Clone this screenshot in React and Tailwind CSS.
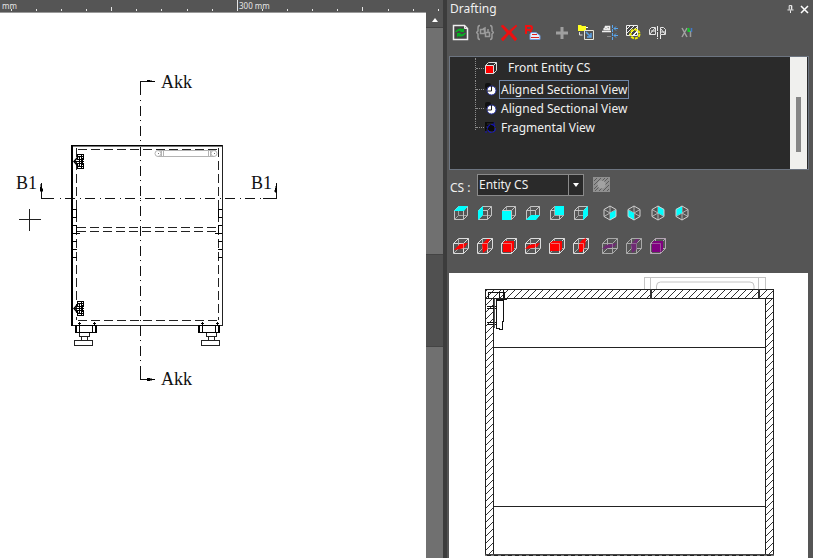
import React, { useState } from 'react';

const minorTicks = [11, 36, 61, 86, 136, 161, 187, 212, 262, 287, 312, 337, 388, 413, 438];

const Ruler = () => (
  <div className="h-3 shrink-0 overflow-hidden bg-[#555555]">
    <svg width="1200" height="12" shapeRendering="crispEdges" fill="#e6e6e6">
      {minorTicks.map((x) => (
        <rect key={x} x={x} y="9" width="1" height="2" />
      ))}
      <rect x="111" y="7" width="1" height="4" />
      <rect x="362" y="7" width="1" height="4" />
      <rect x="237" y="0" width="1" height="11" />
      <text x="2" y="9" className="font-['Noto_Sans',sans-serif] text-[8px]">mm</text>
      <text x="239" y="9" className="font-['Noto_Sans',sans-serif] text-[8px]">300 mm</text>
    </svg>
  </div>
);

const Hinge = ({ y }) => (
  <g transform={`translate(74 ${y})`} stroke="#000" fill="none">
    <path d="M3.5 .5h6v5h-6zM3.5 9.5h6v5h-6zM4 2.5h5M4 12.5h5M7.5 1v13" />
    <path d="M1 7.5h9M5.5 3v9M8.5 4v7M4 5.5h6M4 9.5h6" />
    <path d="M4 3L0 7.500 4 12" shapeRendering="auto" strokeWidth="1.500" />
    <path d="M2.500 6.500h1M2.500 8.500h1" stroke="#fff" />
  </g>
);

const Foot = ({ x, base }) => (
  <g fill="none" stroke="#000">
    <path d={`M${x}.5 325.5h21v7h-21zM${x + 1}.5 325v8M${x + 20}.5 325v8M${x + 4}.5 325v7M${x + 17}.5 325v7`} />
    <path d={`M${x} 332.5h22`} />
    <path d={`M${x + 3} 323.5h3M${x + 18} 323.5h3M${x + 4}.5 322v3M${x + 19}.5 322v3`} />
    <path d={`M${base + 5}.5 333v3h10v-3M${base + 7}.5 336v4M${base + 13}.5 336v4M${base}.5 340.5h18v5h-18z`} stroke="#222" />
  </g>
);

const holes = [209, 217, 225, 233, 241, 249, 257];

const CabinetDrawing = () => (
  <svg width="426" height="545" viewBox="0 13 426 545" shapeRendering="crispEdges">
    {/* section lines */}
    <g fill="none" stroke="#111">
      <path d="M155 81.5H140.5V95" />
      <path d="M140.5 100V367" strokeDasharray="1 5 10 4" />
      <path d="M140.5 367V379.5H155" />
      <path d="M41.5 183V198.5H54" />
      <path d="M60 198.5H263" strokeDasharray="1 4 10 5" />
      <path d="M263 198.5H276.5V183" />
    </g>
    <path d="M147 80l8 1.5-8 .5zM147 378l8 1.5-8 1.5zM41 184l2 7h-3zM276.5 184v8h-2z" fill="#000" stroke="#000" strokeWidth=".5" />
    <path d="M19 219.5h22M29.5 209v22" stroke="#222" />

    {/* body */}
    <path d="M71 145.5H223" stroke="#000" />
    <path d="M71 146.5H223" stroke="#777" />
    <path d="M72 145V326" stroke="#000" strokeWidth="2" />
    <path d="M222.5 145V325.5H73" stroke="#222" fill="none" />
    <g stroke="#222" strokeDasharray="9 4" fill="none">
      <path d="M78 149.5H218M76.5 148V320M218.5 148V320M78 320.5H218" />
      <path d="M77 227.5H218M77 231.5H218" />
    </g>
    <path d="M76.5 209v8M76.5 225v8M218.5 209v8M218.5 225v8" stroke="#000" />
    {holes.map((y) => (
      <path key={y} d={`M73 ${y}.5h4M218 ${y}.5h4`} stroke="#000" />
    ))}
    <path d="M77 233.5h3M215 233.5h3" stroke="#000" />

    {/* handle */}
    <g fill="none" stroke="#b4b4b4">
      <path d="M158 150.5H216M158 156.5H214M161.5 150v6M163.5 150v6M208.5 150v6M210.5 150v6" />
      <circle cx="158" cy="153.500" r="3" shapeRendering="auto" />
      <circle cx="214" cy="153.500" r="3" shapeRendering="auto" />
      <path d="M158 153.500h1M214 153.500h1" stroke="#777" />
    </g>

    <Hinge y={154} />
    <Hinge y={301} />
    <Foot x={75} base={74} />
    <Foot x={198} base={201} />

    <g className="font-['Liberation_Serif',serif] text-[18px]" fill="#111">
      <text x="161" y="88">Akk</text>
      <text x="161" y="385">Akk</text>
      <text x="16" y="189">B1</text>
      <text x="251" y="189">B1</text>
    </g>
  </svg>
);

const SectionDrawing = () => (
  <svg width="359" height="285" viewBox="449 273 359 285" shapeRendering="crispEdges">
    <defs>
      <pattern id="hatch" width="7" height="7" patternUnits="userSpaceOnUse">
        <path d="M-1 1L1 -1M0 7L7 0M6 8L8 6" stroke="#333" shapeRendering="auto" />
      </pattern>
    </defs>
    <g fill="none" stroke="#c4c4c4">
      <path d="M644.500 289V277.500H765.500V289M650.500 277V289M758.500 277V289" />
      <path d="M656.500 289V286q0-4 4-4H750q4 0 4 4V289" shapeRendering="auto" />
    </g>
    <g fill="url(#hatch)" stroke="#222">
      <rect x="485.500" y="298.500" width="8" height="256" />
      <rect x="765.500" y="298.500" width="8" height="256" />
      <rect x="485.500" y="289.500" width="288" height="9" />
    </g>
    <path d="M650.500 289v10M759 289v10" stroke="#333" strokeWidth="2" />
    <path d="M494 347.500H765M494 506.500H765" stroke="#222" />
    <path d="M485 555H774" stroke="#777" strokeWidth="2" />
    <path d="M485 554.500H774" stroke="#444" />
    <path d="M487 555.500H774" stroke="#222" strokeDasharray="4 3" />
    {/* hinge */}
    <g fill="none" stroke="#111">
      <path d="M488.500 298V292.500H504.500V298M499.500 292v6M503.500 290v8" />
      <path d="M496 299.500h11M487 306.500h10M487 308.500h10M487 322.500h10M487 324.500h10" />
      <path d="M496.500 300V328l3 1h3V322l1-1V300z" fill="#fff" />
      <path d="M494.500 299V328" stroke="#555" />
    </g>
  </svg>
);

const boxFaces = {
  top: '0,5 5,0 14,0 10,5',
  left: '0,5 5,0 5,9 0,14',
  front: '0,5 9,5 9,14 0,14',
  bottom: '0,14 5,9 14,9 10,14',
  back: '5,0 14,0 14,9 5,9',
  right: '9,5 14,0 14,9 9,14',
};

const BoxIcon = ({ face }) => (
  <svg width="16" height="16" viewBox="-1 -1 16 16">
    <path d="M4.500 .5v9h9M4.500 9.500L.5 13.500" stroke="#a5a5a5" fill="none" />
    <path d="M.5 4.500h9v9h-9zM.5 4.500l4-4h9l-4 4M13.500 .5v9l-4 4" stroke="#c4c4c4" fill="none" />
    <polygon points={boxFaces[face]} fill="#00ffff" />
  </svg>
);

const hexFaces = {
  frontRight: '7,7 13,4 13,11 7,14',
  frontLeft: '1,4 7,7 7,14 1,11',
  backRight: '7,0 13,3 13,10 7,7',
  backLeft: '1,3 7,0 7,7 1,10',
};

const HexIcon = ({ face }) => (
  <svg width="16" height="16" viewBox="-1 -1 16 16">
    <path d="M1 3.500L7 7l6-3.500M7 7v7M7 0v7M1 10.500L7 7l6 3.500" stroke="#b4b4b4" fill="none" />
    <polygon points={hexFaces[face]} fill="#00ffff" />
    <path d="M7 0l6 3.500v7L7 14l-6-3.500v-7z" stroke="#d0d0d0" fill="none" />
  </svg>
);

const cutFaces = {
  horizontal: '2,13 6,9 8,7 16,6 12,11 8,12',
  vertical: '6,7 11,2 14,2 12,6 12,12 7,16',
  front: '3,6 5,4 14,4 14,12 12,15 3,15',
  flat: '1,12 5,8 16,6 13,10 8,11',
  rear: '2,6 5,4 14,4 14,12 12,14 2,14',
  side: '7,7 10,3 14,1 13,10 10,15 7,15',
};

const CutIcon = ({ face, color = '#ff0000', edge = '#dcdcdc' }) => (
  <svg width="18" height="18" viewBox="0 0 18 18">
    <path d="M1.500 6.500h10v10h-10zM1.500 6.500l5-5h10l-5 5M16.500 1.500v10l-5 5" stroke={edge} fill="none" />
    <path d="M6.500 1.500v10h10M6.500 11.500l-5 5" stroke="#b0b0b0" fill="none" />
    <polygon points={cutFaces[face]} fill={color} />
    <path d="M3 6.500h8.500v8" stroke={edge} strokeOpacity=".5" fill="none" />
  </svg>
);

const toolIcons = {
  Refresh: (
    <>
      <path d="M1.500 1.500h11l3 3v11h-14z" stroke="#eee" strokeWidth="1.500" fill="#444" />
      <path d="M12.500 1.500v3h3" stroke="#eee" fill="none" />
      <path d="M3 8q3-5 8-3l1-1v4H8l1-1Q6 6 5 8zM14 9q-3 5-8 3l-1 2V9h4l-1 1q3 1 4-1z" fill="#08b022" />
    </>
  ),
  Group: (
    <g stroke="#9b9b9b" fill="none">
      <path d="M4 1.500Q2 1.500 2 4v3L.5 8.500 2 10v3q0 2.500 2 2.500M14 1.500q2 0 2 2.500v3l1.500 1.500L16 10v3q0 2.500-2 2.500" strokeWidth="1.500" />
      <path d="M4.500 5.500h4v4h-4zM9.500 8.500h4v4h-4zM7 5l2-1v4M12 8V5" strokeWidth="1.500" />
    </g>
  ),
  Delete: (
    <path d="M1 2l2-1 6 6 7-6 1 1-6 6 6 7-2 2-6-7-6 7-2-2 6-6z" fill="#f00f0f" stroke="#f00f0f" strokeWidth=".5" />
  ),
  Rename: (
    <>
      <path d="M2 10V2h4q2 0 2 2t-2 2H2m4 0l2 4" stroke="#f01010" strokeWidth="2" fill="none" />
      <path d="M7 8.500h5l4 3v4H6v-5z" fill="#e8eefc" stroke="#6f9de0" />
      <path d="M8 10.500h5M7 13.500h8" stroke="#d22" />
    </>
  ),
  Add: <path d="M9 3v12M3 9h12" stroke="#9f9f9f" strokeWidth="3" />,
  'Insert view': (
    <>
      <path d="M1 1h3l1 1h4v5H1z" fill="#ffff20" />
      <path d="M9 3.500h2" stroke="#fff" />
      <path d="M2.500 8v3h3" stroke="#ddd" fill="none" />
      <path d="M7.500 6.500h9v9h-9z" stroke="#e6e6d8" fill="#555" />
      <path d="M9 8l5 5m0-4v4h-4" stroke="#5aa2e8" fill="none" strokeWidth="1.500" />
    </>
  ),
  Align: (
    <>
      <path d="M1 7.500h9M2.500 5.500h6v-3h-3l-3 3M4 2l4 4M7 5h2" stroke="#eee" strokeWidth="1.500" fill="none" />
      <path d="M11.500 1v16" stroke="#58a6ee" strokeDasharray="3 1" />
      <path d="M17 4.500h-4l2-2m-2 2l2 2M17 11.500h-4l2-2m-2 2l2 2" stroke="#58a6ee" fill="none" />
      <path d="M6 12.500h4" stroke="#888" />
    </>
  ),
  Fragment: (
    <>
      <path d="M1.500 1.500h11v10h-11z" fill="#444" stroke="#eee" />
      <path d="M1 6l5-5M1 10l9-9M3 12l9-9M7 12l5-5" stroke="#eee" />
      <circle cx="10" cy="10" r="4.500" fill="none" stroke="#f2f200" strokeWidth="2" strokeDasharray="3 1" />
      <path d="M8 12l4-4" stroke="#fff" />
    </>
  ),
  Mirror: (
    <>
      <path d="M8.500 2v13" stroke="#eee" strokeDasharray="5 1" />
      <path d="M.5 5.500l2-2h4v7h-6zM11.500 3.500h3l2 2v5h-5zM1 10l5-6M2 7h4M12 5l4 5M12 8h4" stroke="#e4e4e4" fill="none" />
      <path d="M11.500 11v4" stroke="#eee" />
    </>
  ),
  Coordinates: (
    <>
      <path d="M4 4l5 9M9 4l-5 9" stroke="#a2a2a2" strokeWidth="1.500" />
      <path d="M10.500 4v3h2" stroke="#14c828" strokeWidth="2" fill="none" />
      <path d="M12.500 7v6" stroke="#9a9a9a" strokeWidth="1.500" />
      <path d="M13.500 4v4" stroke="#3f78c8" strokeWidth="1.500" />
    </>
  ),
};

const ToolButton = ({ label, children }) => (
  <button type="button" aria-label={label} className="flex h-6 w-6 items-center justify-center hover:bg-[#6a6a6a]">
    {children}
  </button>
);

const Tool = ({ name }) => (
  <ToolButton label={name}>
    <svg width="18" height="18" viewBox="0 0 18 18">{toolIcons[name]}</svg>
  </ToolButton>
);

const SectionGlyph = () => (
  <svg width="14" height="14" viewBox="0 0 14 14">
    <rect x="1" y="0" width="6" height="6" rx="2" fill="#111" />
    <circle cx="7.500" cy="7.500" r="4.500" fill="#fff" stroke="#2630a0" />
    <path d="M7.500 3v5H3" stroke="#222" fill="none" />
  </svg>
);

const FragmentGlyph = () => (
  <svg width="14" height="14" viewBox="0 0 14 14">
    <rect x="1" y="1" width="9" height="9" fill="#0b0b0b" />
    <path d="M3 3h6M2 6h2M2 9h2" stroke="#333" />
    <path d="M10 1.500v3M2 10v2" fill="none" stroke="#1212b8" />
    <circle cx="7.500" cy="7.500" r="4" fill="none" stroke="#1414e0" strokeDasharray="5 1" />
  </svg>
);

const views = [
  { id: 2, name: 'Aligned Sectional View', icon: <SectionGlyph /> },
  { id: 3, name: 'Aligned Sectional View', icon: <SectionGlyph /> },
  { id: 4, name: 'Fragmental View', icon: <FragmentGlyph /> },
];

const ViewTree = () => {
  const [selected, setSelected] = useState(2);

  return (
    <div className="ml-0.5 mr-1 flex h-[114px] border border-[#6c7480] bg-[#2a2a2a]">
      <div className="flex-1 pl-[25px] pt-px">
        <button type="button" className="mb-0.5 flex h-5 items-center" onClick={() => setSelected(1)}>
          <span className="h-5 w-0 border-l border-dotted border-[#8c8c8c]"></span>
          <span className="w-2 border-t border-dotted border-[#8c8c8c]"></span>
          <svg width="14" height="14" viewBox="0 0 14 14">
            <path d="M1.500 4.500l3-3h8v8l-3 3M12.500 1.500l-3 3" stroke="#ddd" fill="none" />
            <path d="M1.500 4.500h8v8h-8z" fill="#ff0000" stroke="#ddd" />
          </svg>
          <span className="ml-2 px-0.5">Front Entity CS</span>
        </button>
        {views.map((view) => (
          <button key={view.id} type="button" className="flex h-[19px] items-center" onClick={() => setSelected(view.id)}>
            <span className={view.id === 4 ? 'mb-2 h-3 w-0 border-l border-dotted border-[#8c8c8c]' : 'h-5 w-0 border-l border-dotted border-[#8c8c8c]'}></span>
            <span className="w-2 border-t border-dotted border-[#8c8c8c]"></span>
            {view.icon}
            <span className={selected === view.id ? 'ml-px flex h-[19px] items-center border border-[#6f86a8] px-px' : 'ml-px flex h-[19px] items-center border border-transparent px-px'}>
              {view.name}
            </span>
          </button>
        ))}
      </div>
      <div className="mr-px w-[17px] bg-[#f0f0ee] pt-10">
        <div className="mx-auto h-[55px] w-[5px] bg-[#868686]"></div>
      </div>
    </div>
  );
};

const DraftingPanel = () => (
  <aside className="flex w-[366px] shrink-0 flex-col bg-[#555555] font-['Noto_Sans',sans-serif] text-[12px] leading-4 text-[#f0f0f0]">
    <header className="flex h-[18px] items-center pl-[3px] pr-1">
      <h1 className="flex-1">Drafting</h1>
      <button type="button" aria-label="Pin" className="mr-1.5">
        <svg width="7" height="9" viewBox="0 0 8 10" fill="none" stroke="#fff">
          <path d="M2.500 5V.5h3V5M5 1v4M.5 5.500h7M4 6v3" />
        </svg>
      </button>
      <button type="button" aria-label="Close">
        <svg width="9" height="9" viewBox="0 0 9 9" stroke="#fff" strokeWidth="1.500">
          <path d="M1 1l7 7M8 1L1 8" />
        </svg>
      </button>
    </header>

    <div className="mb-[11px] ml-0.5 mt-[3px] flex">
      <Tool name="Refresh" />
      <Tool name="Group" />
      <Tool name="Delete" />
      <Tool name="Rename" />
      <div className="ml-[5px] flex">
        <Tool name="Add" />
        <Tool name="Insert view" />
        <Tool name="Align" />
        <Tool name="Fragment" />
        <Tool name="Mirror" />
      </div>
      <div className="ml-[5px] flex">
        <Tool name="Coordinates" />
      </div>
    </div>

    <ViewTree />

    <div className="mb-[5px] mt-[3px] flex h-[23px] items-center pl-[3px]">
      <label htmlFor="cs" className="w-[26px] whitespace-nowrap pt-1.5">CS :</label>
      <div className="relative ml-px">
        <select
          id="cs"
          className="block h-[22px] w-[107px] appearance-none border border-[#8a8a8a] bg-[#2a2a2a] pl-px text-[12px] outline-none"
        >
          <option>Entity CS</option>
          <option>Front Entity CS</option>
        </select>
        <span className="pointer-events-none absolute inset-y-0 right-0 flex w-4 items-center justify-center border border-[#8a8a8a]">
          <svg width="6" height="4" viewBox="0 0 6 4">
            <path d="M0 0h6L3 4z" fill="#fff" />
          </svg>
        </span>
      </div>
      <button type="button" aria-label="Hatch" className="ml-[9px]">
        <svg width="17" height="15" viewBox="0 0 17 15">
          <rect width="17" height="15" fill="#909090" />
          <path d="M1 4l3-3M1 8l7-7M1 12l11-11M2 14L15 1M6 14L16 4M10 14l6-6M14 14l2-2" stroke="#5c5c5c" />
          <circle cx="8.500" cy="7.500" r="4" fill="#a2a2a2" />
        </svg>
      </button>
    </div>

    <div className="mb-[9px] ml-0.5 flex">
      <ToolButton label="Top"><BoxIcon face="top" /></ToolButton>
      <ToolButton label="Left"><BoxIcon face="left" /></ToolButton>
      <ToolButton label="Front"><BoxIcon face="front" /></ToolButton>
      <ToolButton label="Bottom"><BoxIcon face="bottom" /></ToolButton>
      <ToolButton label="Back"><BoxIcon face="back" /></ToolButton>
      <ToolButton label="Right"><BoxIcon face="right" /></ToolButton>
      <div className="ml-[5px] flex">
        <ToolButton label="Front right"><HexIcon face="frontRight" /></ToolButton>
        <ToolButton label="Front left"><HexIcon face="frontLeft" /></ToolButton>
        <ToolButton label="Back right"><HexIcon face="backRight" /></ToolButton>
        <ToolButton label="Back left"><HexIcon face="backLeft" /></ToolButton>
      </div>
    </div>

    <div className="mb-[15px] ml-0.5 flex">
      <ToolButton label="Section down"><CutIcon face="horizontal" /></ToolButton>
      <ToolButton label="Section left"><CutIcon face="vertical" /></ToolButton>
      <ToolButton label="Section front"><CutIcon face="front" /></ToolButton>
      <ToolButton label="Section up"><CutIcon face="flat" /></ToolButton>
      <ToolButton label="Section back"><CutIcon face="rear" /></ToolButton>
      <ToolButton label="Section right"><CutIcon face="side" /></ToolButton>
      <div className="ml-[5px] flex">
        <ToolButton label="Horizontal cut"><CutIcon face="flat" color="#6f2a74" edge="#a8a8a8" /></ToolButton>
        <ToolButton label="Vertical cut"><CutIcon face="vertical" color="#6f2a74" edge="#a8a8a8" /></ToolButton>
        <ToolButton label="Frontal cut"><CutIcon face="front" color="#800080" edge="#b4a4b4" /></ToolButton>
      </div>
    </div>

    <div className="ml-0.5 mr-[5px] min-h-0 flex-1 overflow-hidden bg-white">
      <SectionDrawing />
    </div>
  </aside>
);

const App = () => {
  return (
    <div className="flex h-screen overflow-hidden bg-[#3c3c3c]">
      <main className="flex min-w-0 flex-1 flex-col">
        <Ruler />
        <div className="flex min-h-0 flex-1">
          <div className="min-w-0 flex-1 overflow-hidden border-t border-[#9a9a9a] bg-white">
            <CabinetDrawing />
          </div>
          {/* Vertical scrollbar */}
          <div className="flex w-[17px] flex-col bg-[#707070]">
            <button type="button" aria-label="Scroll up" className="flex h-4 items-center justify-center border-b border-[#444444] bg-[#555555]">
              <svg width="6" height="4" viewBox="0 0 6 4">
                <path d="M0 4h6L3 0z" fill="#fff" />
              </svg>
            </button>
            <div className="grow-[227]"></div>
            <div className="grow-[91] border-y border-[#444444] bg-[#505050]"></div>
            <div className="grow-[212]"></div>
          </div>
        </div>
      </main>
      <div className="w-1 shrink-0 bg-[#3c3c3c]"></div>
      <DraftingPanel />
    </div>
  );
};

export default App;
